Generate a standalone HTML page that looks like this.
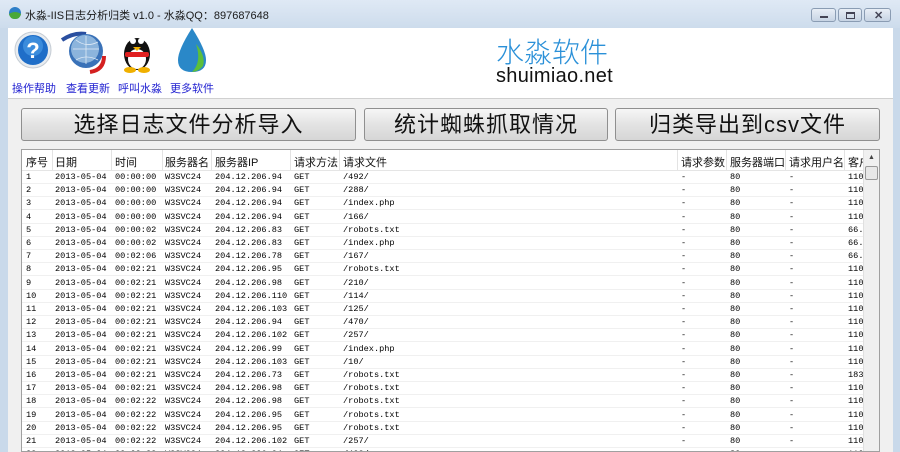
<!DOCTYPE html>
<html><head><meta charset="utf-8"><style>
*{margin:0;padding:0;box-sizing:border-box}
body{width:900px;height:452px;overflow:hidden;background:#c9d9ea;font-family:"Liberation Sans","Noto Sans CJK SC",sans-serif;position:relative}
.title{position:absolute;left:0;top:0;width:900px;height:28px;background:linear-gradient(#dfe9f5,#cddcec)}
.title span{position:absolute;left:25px;top:7px;font-size:11px;color:#1a1a1a}
.wb{position:absolute;top:8px;height:14px;border:1px solid #8a9cb3;border-radius:3px;background:linear-gradient(#e8eef6,#c7d4e4)}
.hdr{position:absolute;left:8px;top:28px;width:885px;height:70px;background:#fff}
.gray{position:absolute;left:8px;top:98px;width:885px;height:354px;background:#f0f0f0;border-top:1px solid #d0d0d0}
.lbl{position:absolute;top:80px;font-size:11px;color:#1f1fd0}
.btn{position:absolute;top:108px;height:33px;border:1px solid #8f8f8f;border-radius:3px;background:linear-gradient(#f6f6f6,#e3e3e3 50%,#d6d6d6);font-size:22px;color:#111;text-align:center;line-height:32px;letter-spacing:1px}
.tbl{position:absolute;left:21px;top:149px;width:859px;height:303px;background:#fff;border:1px solid #a0a0a0;overflow:hidden}
.row{position:absolute;left:0;height:13px;width:842px;font-family:"Liberation Mono","Noto Sans CJK SC",monospace;font-size:8.6px;color:#000;border-bottom:1px solid #f0f0f0}
.row span{position:absolute;top:1px;white-space:nowrap}
.hrow{position:absolute;left:0;top:0;width:842px;height:21px;border-bottom:1px solid #e5e5e5;font-size:11px;color:#111}
.hrow span{position:absolute;top:4px;white-space:nowrap}
.hrow i{position:absolute;top:0;width:1px;height:20px;background:#e3e3e3}
.sb{position:absolute;right:0;top:0;width:16px;height:303px;background:#f0f0f0;border-left:1px solid #e0e0e0}
</style></head><body>
<div class="title"><svg style="position:absolute;left:8px;top:6px" width="14" height="14"><circle cx="7" cy="7" r="6" fill="#2e7fc8"/><path d="M1 8 Q7 4 13 8 Q12 13 7 13 Q2 13 1 8Z" fill="#4aa83a"/></svg><span>水淼-IIS日志分析归类 v1.0 - 水淼QQ：897687648</span></div>
<div class="wb" style="left:811px;width:25px"><div style="position:absolute;left:8px;top:7px;width:8px;height:2px;background:#445"></div></div>
<div class="wb" style="left:838px;width:24px"><div style="position:absolute;left:7px;top:3px;width:9px;height:7px;border:1px solid #445;border-top-width:2px"></div></div>
<div class="wb" style="left:864px;width:27px"><div style="position:absolute;left:9px;top:0px;font-size:11px;color:#445;font-weight:bold">✕</div></div>
<div class="hdr"></div>
<svg style="position:absolute;left:10px;top:28px" width="210" height="50">
<circle cx="23" cy="22" r="18" fill="#e8ecf0" stroke="#c5ccd4"/><circle cx="23" cy="22" r="15" fill="#1f6ec8"/><circle cx="23" cy="18" r="10" fill="#4fa0ea" opacity=".6"/>
<text x="23" y="30" font-size="22" font-weight="bold" fill="#fff" text-anchor="middle" font-family="Liberation Sans">?</text>
<path d="M52 12 Q64 4 76 6" stroke="#2a4fa0" stroke-width="4" fill="none"/><path d="M94 28 Q94 42 80 44" stroke="#d42020" stroke-width="4" fill="none"/>
<circle cx="76" cy="23" r="17" fill="#3a72b8"/><circle cx="75" cy="21" r="14" fill="#8cb4dc"/><path d="M63 21 H89 M76 8 V36 M66 12 Q76 20 88 14 M66 32 Q76 26 88 32" stroke="#dfeaf6" stroke-width="0.8" fill="none"/>
<ellipse cx="127" cy="26" rx="13" ry="16" fill="#111"/><ellipse cx="127" cy="31" rx="9" ry="10" fill="#fff"/><circle cx="123" cy="13" r="3" fill="#fff"/><circle cx="131" cy="13" r="3" fill="#fff"/><path d="M123 19 L131 19 L127 23Z" fill="#f0b000"/><rect x="115" y="24" width="24" height="5" rx="2" fill="#e02020"/><ellipse cx="120" cy="42" rx="6" ry="3" fill="#f0b000"/><ellipse cx="134" cy="42" rx="6" ry="3" fill="#f0b000"/>
<path d="M182 0 Q168 22 168 32 Q168 44 182 44 Q196 44 196 32 Q196 22 182 0Z" fill="#2a88c8"/><path d="M186 16 Q196 28 193 38 Q188 44 182 44 Q192 34 186 16Z" fill="#5cbf3a"/>
</svg>
<div class="lbl" style="left:12px">操作帮助</div><div class="lbl" style="left:66px">查看更新</div><div class="lbl" style="left:118px">呼叫水淼</div><div class="lbl" style="left:170px">更多软件</div>
<div style="position:absolute;left:496px;top:31px;font-size:28px;color:#2a90d8;font-family:'Noto Sans CJK SC',sans-serif;font-weight:300">水淼软件</div>
<div style="position:absolute;left:496px;top:65px;font-size:20px;color:#111;letter-spacing:0.3px">shuimiao.net</div>
<div class="gray"></div>
<div class="btn" style="left:21px;width:335px">选择日志文件分析导入</div>
<div class="btn" style="left:364px;width:244px">统计蜘蛛抓取情况</div>
<div class="btn" style="left:615px;width:265px">归类导出到csv文件</div>
<div class="tbl">
<div class="hrow"><span style="left:4px">序号</span><i style="left:30px"></i><span style="left:33px">日期</span><i style="left:89px"></i><span style="left:93px">时间</span><i style="left:140px"></i><span style="left:143px">服务器名</span><i style="left:189px"></i><span style="left:193px">服务器IP</span><i style="left:268px"></i><span style="left:272px">请求方法</span><i style="left:317px"></i><span style="left:321px">请求文件</span><i style="left:655px"></i><span style="left:659px">请求参数</span><i style="left:704px"></i><span style="left:708px">服务器端口</span><i style="left:763px"></i><span style="left:767px">请求用户名</span><i style="left:822px"></i><span style="left:826px">客户</span></div>
<div id="rows"></div>
<div class="sb"><div style="position:absolute;left:4px;top:4px;font-size:7px;color:#444">▲</div><div style="position:absolute;left:1px;top:16px;width:13px;height:14px;border:1px solid #999;border-radius:2px;background:#e8e8e8"></div></div>
</div>
<script>
var d=[["00:00:00","94","/492/","110"],["00:00:00","94","/288/","110"],["00:00:00","94","/index.php","110"],["00:00:00","94","/166/","110"],["00:00:02","83","/robots.txt","66."],["00:00:02","83","/index.php","66."],["00:02:06","78","/167/","66."],["00:02:21","95","/robots.txt","110"],["00:02:21","98","/210/","110"],["00:02:21","110","/114/","110"],["00:02:21","103","/125/","110"],["00:02:21","94","/470/","110"],["00:02:21","102","/257/","110"],["00:02:21","99","/index.php","110"],["00:02:21","103","/10/","110"],["00:02:21","73","/robots.txt","183"],["00:02:21","98","/robots.txt","110"],["00:02:22","98","/robots.txt","110"],["00:02:22","95","/robots.txt","110"],["00:02:22","95","/robots.txt","110"],["00:02:22","102","/257/","110"],["00:02:22","94","/492/","110"]];
var h="";d.forEach(function(r,i){h+='<div class="row" style="top:'+(21+i*13.2)+'px"><span style="left:4px">'+(i+1)+'</span><span style="left:33px">2013-05-04</span><span style="left:93px">'+r[0]+'</span><span style="left:143px">W3SVC24</span><span style="left:193px">204.12.206.'+r[1]+'</span><span style="left:272px">GET</span><span style="left:321px">'+r[2]+'</span><span style="left:659px">-</span><span style="left:708px">80</span><span style="left:767px">-</span><span style="left:826px">'+r[3]+'</span></div>'});
document.getElementById("rows").innerHTML=h;
</script>
</body></html>
